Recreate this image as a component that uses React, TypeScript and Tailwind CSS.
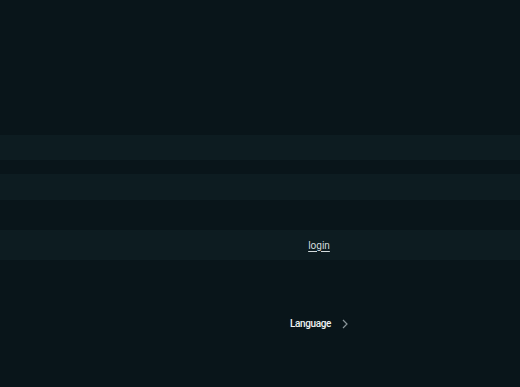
export default function App() {
  return (
    <div
      className="flex h-[387px] w-[520px] flex-col bg-[#09151a] text-[10px]"
      style={{ fontFamily: 'Roboto, "Liberation Sans", sans-serif' }}
    >
      <div className="h-[135px]" />
      <div className="h-[25px] bg-[#0d1c21]" />
      <div className="h-[14px]" />
      <div className="h-[26px] bg-[#0d1c21]" />
      <div className="h-[30px]" />
      <div className="flex h-[30px] items-center bg-[#0d1c21] pl-[118px]">
        <div className="flex flex-1 justify-center">
          <a href="#" className="text-[#d3dbdd] underline underline-offset-2">
            login
          </a>
        </div>
      </div>
      <div className="flex h-[71px] items-end pl-[118px]">
        <div className="flex flex-1 items-center justify-center gap-[11px]">
          <span className="font-medium tracking-[-0.4px] text-[#eef2f3]">Language</span>
          <svg width="6" height="10" viewBox="0 0 6 10" fill="none" stroke="#8a9599" strokeWidth="1.2">
            <path d="M1 1l4 4-4 4" />
          </svg>
        </div>
      </div>
    </div>
  );
}
